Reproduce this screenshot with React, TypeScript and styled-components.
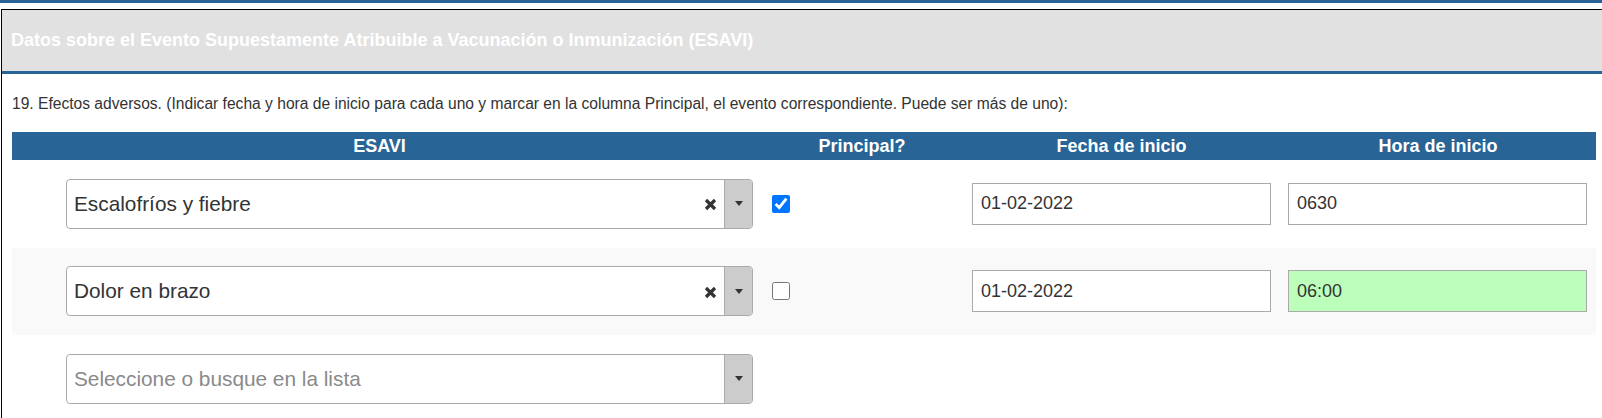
import React from "react";
import styled, { createGlobalStyle } from "styled-components";

const GlobalStyle = createGlobalStyle`
  html, body {
    margin: 0;
    padding: 0;
    background: #ffffff;
    overflow: hidden;
  }
  body {
    font-family: "Liberation Sans", Arial, sans-serif;
    color: #333333;
  }
`;

const BLUE = "#286496";

const TopRule = styled.div`
  height: 3px;
  background: ${BLUE};
`;

const Panel = styled.section`
  margin: 6px 0 0 1px;
  width: 1620px;
  border: 1px solid #000000;
  border-right: none;
  background: #ffffff;
`;

const PanelHeading = styled.header`
  height: 61px;
  display: flex;
  align-items: center;
  padding: 0 9px;
  background: #e1e1e1;
  border-bottom: 3px solid ${BLUE};
  color: #ffffff;
  font-size: 18px;
  font-weight: bold;
`;

const PanelBody = styled.div`
  padding: 20px 0 0 10px;
`;

const Intro = styled.p`
  margin: 0 0 18px;
  font-size: 15.6px;
  line-height: 20px;
  color: #333333;
`;

const Table = styled.div`
  width: 1584px;
  display: grid;
  grid-template-columns: 749px 202px 317px 316px;
`;

const HeadCell = styled.div<{ $shift?: number }>`
  height: 28px;
  background: ${BLUE};
  color: #ffffff;
  font-size: 18px;
  font-weight: bold;
  display: flex;
  align-items: center;
  justify-content: center;
  padding-right: ${(p) => p.$shift ?? 0}px;
`;

const Cell = styled.div<{ $striped?: boolean; $pl: number; $pr: number }>`
  height: 87.5px;
  display: flex;
  align-items: center;
  box-sizing: border-box;
  padding: 0 ${(p) => p.$pr}px 0 ${(p) => p.$pl}px;
  background: ${(p) => (p.$striped ? "#f9f9f9" : "transparent")};
`;

const SelectBox = styled.div`
  flex: 1;
  height: 50px;
  box-sizing: border-box;
  border: 1px solid #aaaaaa;
  border-radius: 4px;
  background: #ffffff;
  display: flex;
  align-items: stretch;
  overflow: hidden;
`;

const SelectText = styled.span<{ $placeholder?: boolean }>`
  flex: 1;
  display: flex;
  align-items: center;
  padding-left: 7px;
  font-size: 20.8px;
  color: ${(p) => (p.$placeholder ? "#8a8a8a" : "#333333")};
  white-space: nowrap;
`;

const ClearButton = styled.span`
  width: 28px;
  display: flex;
  align-items: center;
  justify-content: center;
  color: #333333;
  margin-top: 2px;
`;

const ArrowBox = styled.span`
  width: 27px;
  background: #cccccc;
  border-left: 1px solid #aaaaaa;
  display: flex;
  align-items: center;
  justify-content: center;
`;

const Triangle = styled.span`
  width: 0;
  height: 0;
  border-style: solid;
  border-width: 5px 4px 0 4px;
  border-color: #333333 transparent transparent transparent;
`;

const Check = styled.input`
  width: 18px;
  height: 18px;
  margin: 0;
`;

const TextInput = styled.input<{ $valid?: boolean }>`
  width: 100%;
  height: 42px;
  box-sizing: border-box;
  border: 1px solid #aaaaaa;
  border-radius: 0;
  padding: 0 8px;
  font-family: "Liberation Sans", Arial, sans-serif;
  font-size: 18px;
  color: #333333;
  background: ${(p) => (p.$valid ? "#bbffbb" : "#ffffff")};
  outline: none;
`;

const ClearIcon = () => (
  <svg width="13" height="13" viewBox="0 0 13 13">
    <path d="M2 2 L11 11 M11 2 L2 11" stroke="#333" strokeWidth="3.2" strokeLinecap="butt" />
  </svg>
);

type Entry = { label?: string; main?: boolean; date?: string; time?: string; valid?: boolean };

const entries: Entry[] = [
  { label: "Escalofríos y fiebre", main: true, date: "01-02-2022", time: "0630" },
  { label: "Dolor en brazo", main: false, date: "01-02-2022", time: "06:00", valid: true },
  {},
];

export default function App() {
  return (
    <>
      <GlobalStyle />
      <TopRule />
      <Panel>
        <PanelHeading>
          Datos sobre el Evento Supuestamente Atribuible a Vacunación o Inmunización (ESAVI)
        </PanelHeading>
        <PanelBody>
          <Intro>
            19. Efectos adversos. (Indicar fecha y hora de inicio para cada uno y marcar en la
            columna Principal, el evento correspondiente. Puede ser más de uno):
          </Intro>
          <Table>
            <HeadCell $shift={14}>ESAVI</HeadCell>
            <HeadCell>Principal?</HeadCell>
            <HeadCell>Fecha de inicio</HeadCell>
            <HeadCell>Hora de inicio</HeadCell>
            {entries.map((e, i) => {
              const striped = i % 2 === 1;
              const filled = e.label !== undefined;
              return (
                <React.Fragment key={i}>
                  <Cell $striped={striped} $pl={54} $pr={8}>
                    <SelectBox>
                      <SelectText $placeholder={!filled}>
                        {filled ? e.label : "Seleccione o busque en la lista"}
                      </SelectText>
                      {filled && (
                        <ClearButton>
                          <ClearIcon />
                        </ClearButton>
                      )}
                      <ArrowBox>
                        <Triangle />
                      </ArrowBox>
                    </SelectBox>
                  </Cell>
                  <Cell $striped={striped} $pl={11} $pr={0}>
                    {filled && <Check type="checkbox" defaultChecked={e.main} />}
                  </Cell>
                  <Cell $striped={striped} $pl={9} $pr={9}>
                    {filled && <TextInput defaultValue={e.date} />}
                  </Cell>
                  <Cell $striped={striped} $pl={8} $pr={9}>
                    {filled && <TextInput defaultValue={e.time} $valid={e.valid} />}
                  </Cell>
                </React.Fragment>
              );
            })}
          </Table>
        </PanelBody>
      </Panel>
    </>
  );
}
